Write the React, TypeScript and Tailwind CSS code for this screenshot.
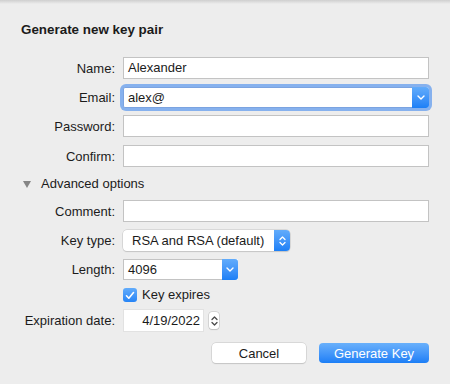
import React from 'react';

const font = { fontFamily: '"Liberation Sans", Arial, sans-serif' };

function Label({ children }: { children: React.ReactNode }) {
  return <div className="w-[94px] shrink-0 text-right text-[13px] leading-none text-[#1b1b1b]">{children}</div>;
}

function TextField({ value = '' }: { value?: string }) {
  return (
    <div className="flex-1 h-[22px] bg-white border border-[#c3c3c3] flex items-center pl-[4px] text-[13px] text-[#1b1b1b]">
      {value}
    </div>
  );
}

function ChevronDown() {
  return (
    <svg width="8" height="5" viewBox="0 0 8 5" fill="none">
      <path d="M1 1l3 3 3-3" stroke="white" strokeWidth="1.4" strokeLinecap="round" strokeLinejoin="round" />
    </svg>
  );
}

function UpDown({ color = 'white' }: { color?: string }) {
  return (
    <svg width="7" height="12" viewBox="0 0 7 12" fill="none">
      <path d="M1 4.5l2.5-2.5 2.5 2.5M1 7.5l2.5 2.5 2.5-2.5" stroke={color} strokeWidth="1.3" strokeLinecap="round" strokeLinejoin="round" />
    </svg>
  );
}

export default function App() {
  return (
    <div style={font} className="w-[450px] h-[384px] bg-[#ededed] relative overflow-hidden">
      <div className="absolute top-0 left-0 right-0 h-[4px] bg-gradient-to-b from-[#cfcfcf] to-[#ededed]" />
      <div className="flex flex-col pl-[21px] pr-[21px] pt-[22px]">
        <h1 className="text-[13.4px] font-bold leading-[16px] text-[#1b1b1b]">Generate new key pair</h1>

        <div className="flex items-center gap-[8px] mt-[19px]">
          <Label>Name:</Label>
          <TextField value="Alexander" />
        </div>

        <div className="flex items-center gap-[8px] mt-[8px]">
          <Label>Email:</Label>
          <div className="flex-1 h-[21px] flex rounded-[3px] ring-[3px] ring-[#86b1ee] bg-white">
            <div className="flex-1 border border-[#7ba3e0] border-r-0 flex items-center pl-[4px] text-[13px] text-[#1b1b1b] rounded-l-[2px]">
              alex@
            </div>
            <div className="w-[17px] rounded-r-[3px] bg-gradient-to-b from-[#62acfb] to-[#1b7ff6] flex items-center justify-center">
              <ChevronDown />
            </div>
          </div>
        </div>

        <div className="flex items-center gap-[8px] mt-[7px]">
          <Label>Password:</Label>
          <TextField />
        </div>

        <div className="flex items-center gap-[8px] mt-[8px]">
          <Label>Confirm:</Label>
          <TextField />
        </div>

        <div className="flex items-center h-[16px] mt-[9px] pl-[2px]">
          <svg width="8" height="7" viewBox="0 0 8 7">
            <path d="M0 0h8L4 7z" fill="#858585" />
          </svg>
          <span className="ml-[10px] text-[13px] text-[#1b1b1b]">Advanced options</span>
        </div>

        <div className="flex items-center gap-[8px] mt-[8px]">
          <Label>Comment:</Label>
          <TextField />
        </div>

        <div className="flex items-center gap-[8px] mt-[8px]">
          <Label>Key type:</Label>
          <div className="w-[167px] h-[21px] flex rounded-[4px] bg-white shadow-[0_0_0_0.5px_#c4c4c4,0_1px_1px_#c8c8c8]">
            <div className="flex-1 flex items-center pl-[9px] text-[13px] text-[#1b1b1b]">RSA and RSA (default)</div>
            <div className="w-[16px] rounded-r-[4px] bg-gradient-to-b from-[#62acfb] to-[#1b7ff6] flex items-center justify-center">
              <UpDown />
            </div>
          </div>
        </div>

        <div className="flex items-center gap-[8px] mt-[8px]">
          <Label>Length:</Label>
          <div className="w-[115px] h-[21px] flex bg-white">
            <div className="flex-1 border border-[#c3c3c3] border-r-0 flex items-center pl-[4px] text-[13px] text-[#1b1b1b]">4096</div>
            <div className="w-[16px] rounded-r-[3px] bg-gradient-to-b from-[#62acfb] to-[#1b7ff6] flex items-center justify-center">
              <ChevronDown />
            </div>
          </div>
        </div>

        <div className="flex items-center gap-[8px] mt-[8px] h-[14px]">
          <div className="w-[94px] shrink-0" />
          <div className="flex items-center">
            <div className="w-[14px] h-[14px] rounded-[3px] bg-gradient-to-b from-[#62acfb] to-[#2584f6] flex items-center justify-center">
              <svg width="10" height="9" viewBox="0 0 10 9" fill="none">
                <path d="M1.5 4.8l2.3 2.4L8.5 1.5" stroke="white" strokeWidth="1.6" strokeLinecap="round" strokeLinejoin="round" />
              </svg>
            </div>
            <span className="ml-[5px] text-[13px] text-[#1b1b1b]">Key expires</span>
          </div>
        </div>

        <div className="flex items-center gap-[8px] mt-[7px]">
          <Label>Expiration date:</Label>
          <div className="flex items-center">
            <div className="w-[81px] h-[23px] bg-white border border-[#e2e2e2] flex items-center justify-end pr-[3px] text-[13px] text-[#1b1b1b]">
              4/19/2022
            </div>
            <div className="ml-[5px] w-[10px] h-[17px] rounded-[3px] bg-white shadow-[0_0_0_0.5px_#bdbdbd,0_1px_1px_#c8c8c8] flex items-center justify-center">
              <UpDown color="#4a4a4a" />
            </div>
          </div>
        </div>

        <div className="flex justify-end gap-[13px] mt-[11px] pr-[0px]">
          <button className="w-[94px] h-[20px] rounded-[4px] bg-white shadow-[0_0_0_0.5px_#c4c4c4,0_1px_1px_#c8c8c8] text-[13px] text-[#1b1b1b] leading-none">
            Cancel
          </button>
          <button className="w-[110px] h-[20px] rounded-[4px] bg-gradient-to-b from-[#69b0fb] to-[#1a7ef6] text-[13px] text-white leading-none">
            Generate Key
          </button>
        </div>
      </div>
    </div>
  );
}
